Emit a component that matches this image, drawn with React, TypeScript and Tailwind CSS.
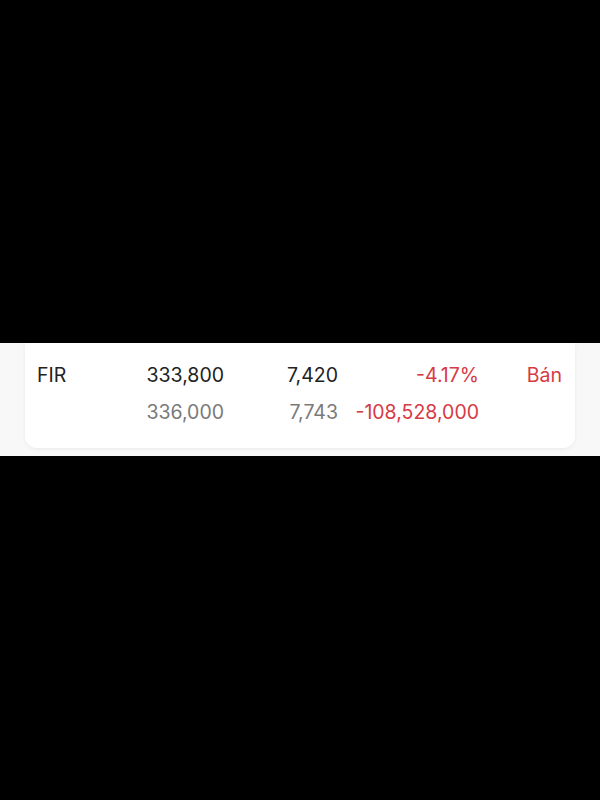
import React from 'react';

const rows = [
  { name: 'FIR', price: '333,800', vol: '7,420', change: '-4.17%', side: 'Bán' },
];

export default function App() {
  const r = rows[0];
  return (
    <div className="w-[600px] h-[800px] bg-black flex flex-col" style={{ fontFamily: 'Inter, "Noto Sans", sans-serif' }}>
      <div className="h-[343px]" />
      {/* Stock row strip */}
      <div className="h-[113px] bg-[#f8f8f8] px-[25px]">
        <div className="bg-white rounded-b-xl shadow-[0_1px_4px_rgba(0,0,0,0.06)] pt-[14px] pb-[17px] px-3 text-[19.5px] leading-[37px]">
          <div className="grid grid-cols-[90px_99px_112px_141px_83px]">
            <span className="text-[#222]">{r.name}</span>
            <span className="text-right text-[#222] pr-[2px]">{r.price}</span>
            <span className="text-right text-[#222]">{r.vol}</span>
            <span className="text-right text-[#d63a44]">{r.change}</span>
            <span className="text-right text-[#d63a44]">{r.side}</span>

            <span />
            <span className="text-right text-[#7a7a7a] pr-[2px]">336,000</span>
            <span className="text-right text-[#7a7a7a]">7,743</span>
            <span className="text-right text-[#d63a44]">-108,528,000</span>
            <span />
          </div>
        </div>
      </div>
      <div className="flex-1" />
    </div>
  );
}
